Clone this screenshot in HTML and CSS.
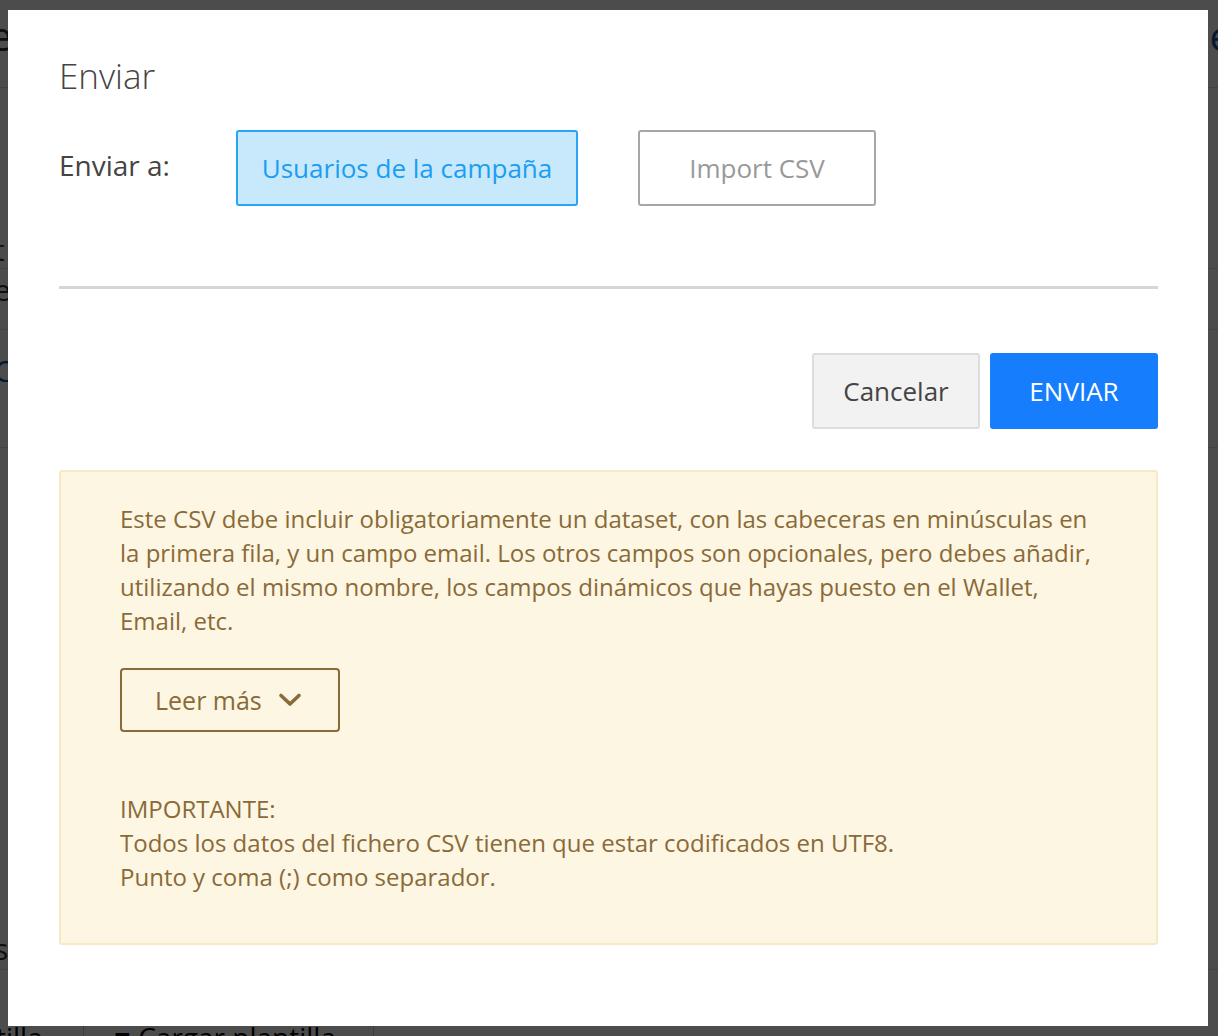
FILE: index.html
```html
<!DOCTYPE html>
<html lang="es">
<head>
    <meta charset="UTF-8">
    <title>Enviar</title>
    <link rel="stylesheet" href="styles.css">
</head>
<body>
    <div class="screen">
        <div class="page">
            <div class="page-head">
                <span class="head-left">e</span>
                <span class="head-right">e</span>
            </div>
            <div class="page-row r1"><span>t</span></div>
            <div class="page-row r2"><span>e</span></div>
            <div class="page-row r3 link"><span>C</span></div>
            <div class="page-row r4"><span>s</span></div>
            <div class="page-foot">
                <span class="foot-cell">tilla</span>
                <span class="foot-cell wide">&#9632; Cargar plantilla</span>
            </div>
        </div>
        <div class="overlay"></div>

        <div class="modal">
            <h2 class="modal-title">Enviar</h2>

            <div class="send-to">
                <span class="send-label">Enviar a:</span>
                <button class="choice active">Usuarios de la campaña</button>
                <button class="choice csv">Import CSV</button>
            </div>

            <hr class="divider">

            <div class="actions">
                <button class="btn btn-cancel">Cancelar</button>
                <button class="btn btn-send">ENVIAR</button>
            </div>

            <div class="alert">
                <p>Este CSV debe incluir obligatoriamente un dataset, con las cabeceras en minúsculas en la primera fila, y un campo email. Los otros campos son opcionales, pero debes añadir, utilizando el mismo nombre, los campos dinámicos que hayas puesto en el Wallet, Email, etc.</p>
                <button class="more">Leer más
                    <svg width="24" height="16" viewBox="0 0 24 16"><path d="M3 3.5 L12 12 L21 3.5" fill="none" stroke="currentColor" stroke-width="3.6" stroke-linecap="round" stroke-linejoin="round"/></svg>
                </button>
                <p class="important">IMPORTANTE:<br>Todos los datos del fichero CSV tienen que estar codificados en UTF8.<br>Punto y coma (;) como separador.</p>
            </div>
        </div>
    </div>
</body>
</html>
```

FILE: styles.css
```css
* { box-sizing: border-box; }
html, body {
    margin: 0;
    padding: 0;
}
body {
    font-family: "Open Sans", "Noto Sans", sans-serif;
    color: #444;
}
.screen {
    position: relative;
    width: 1218px;
    height: 1036px;
    overflow: hidden;
    background: #fff;
}

/* page underneath the modal */
.page {
    height: 100%;
    font-size: 40px;
    color: #333;
}
.page-head {
    display: flex;
    justify-content: space-between;
    height: 88px;
    padding-top: 8px;
    border-bottom: 1px solid #ddd;
    margin: 0 -14px 0 -10px;
}
.head-right { color: #1e4f9c; }
.page-row {
    border-bottom: 1px solid #e3e3e3;
    margin-left: -6px;
    font-size: 30px;
}
.r1 { margin-top: 141px; height: 40px; }
.r2 { height: 61px; }
.r3 { height: 118px; padding-top: 20px; color: #1e4f9c; }
.r4 { margin-top: 480px; }
.page-foot {
    position: absolute;
    left: 0;
    top: 1018px;
    display: flex;
    font-size: 28px;
    color: #000;
}
.foot-cell {
    margin-left: -4px;
    border-right: 1px solid #ccc;
    width: 88px;
}
.foot-cell.wide {
    width: 290px;
    padding-left: 30px;
    margin-left: 0;
}
.overlay {
    position: absolute;
    inset: 0;
    background: rgba(0, 0, 0, 0.7);
}

/* modal */
.modal {
    position: absolute;
    left: 8px;
    top: 10px;
    width: 1200px;
    height: 1016px;
    background: #fff;
    padding: 44px 50px 0 51px;
}
.modal-title {
    margin: 0;
    font-size: 35px;
    font-weight: 300;
    line-height: 44px;
    color: #444;
}
.send-to {
    display: flex;
    align-items: center;
    margin-top: 32px;
}
.send-label {
    font-size: 28px;
    width: 177px;
    margin-top: -6px;
}
.choice {
    font-family: inherit;
    font-size: 26px;
    width: 238px;
    height: 76px;
    padding: 0;
    background: #fff;
    color: #999;
    border: 2px solid #a6a6a6;
    border-radius: 3px;
    margin-right: 60px;
}
.choice.active {
    width: 342px;
    background: #c8e8fb;
    border-color: #2aa4f4;
    color: #1b9ef2;
}
.divider {
    margin: 80px 0 0;
    border: none;
    height: 3px;
    background: #d6d6d6;
}
.actions {
    display: flex;
    justify-content: flex-end;
    gap: 10px;
    margin-top: 64px;
}
.btn {
    font-family: inherit;
    font-size: 26px;
    width: 168px;
    height: 76px;
    border-radius: 3px;
}
.btn-cancel {
    background: #f2f2f2;
    border: 2px solid #ddd;
    color: #444;
}
.btn-send {
    background: #167efc;
    border: none;
    color: #fff;
}
.alert {
    margin-top: 41px;
    height: 475px;
    background: #fcf6e3;
    border: 2px solid #f8e9c4;
    border-radius: 3px;
    padding: 30px 56px 0 59px;
    color: #8a6a38;
    font-size: 24px;
    line-height: 34px;
}
.alert p { margin: 0; }
.more {
    display: flex;
    align-items: center;
    gap: 16px;
    font-family: inherit;
    font-size: 25px;
    color: #8a6a38;
    background: transparent;
    border: 2px solid #8a6a38;
    border-radius: 4px;
    height: 64px;
    width: 220px;
    padding: 0 0 0 33px;
    margin-top: 30px;
}
.important { margin-top: 60px !important; }
```
